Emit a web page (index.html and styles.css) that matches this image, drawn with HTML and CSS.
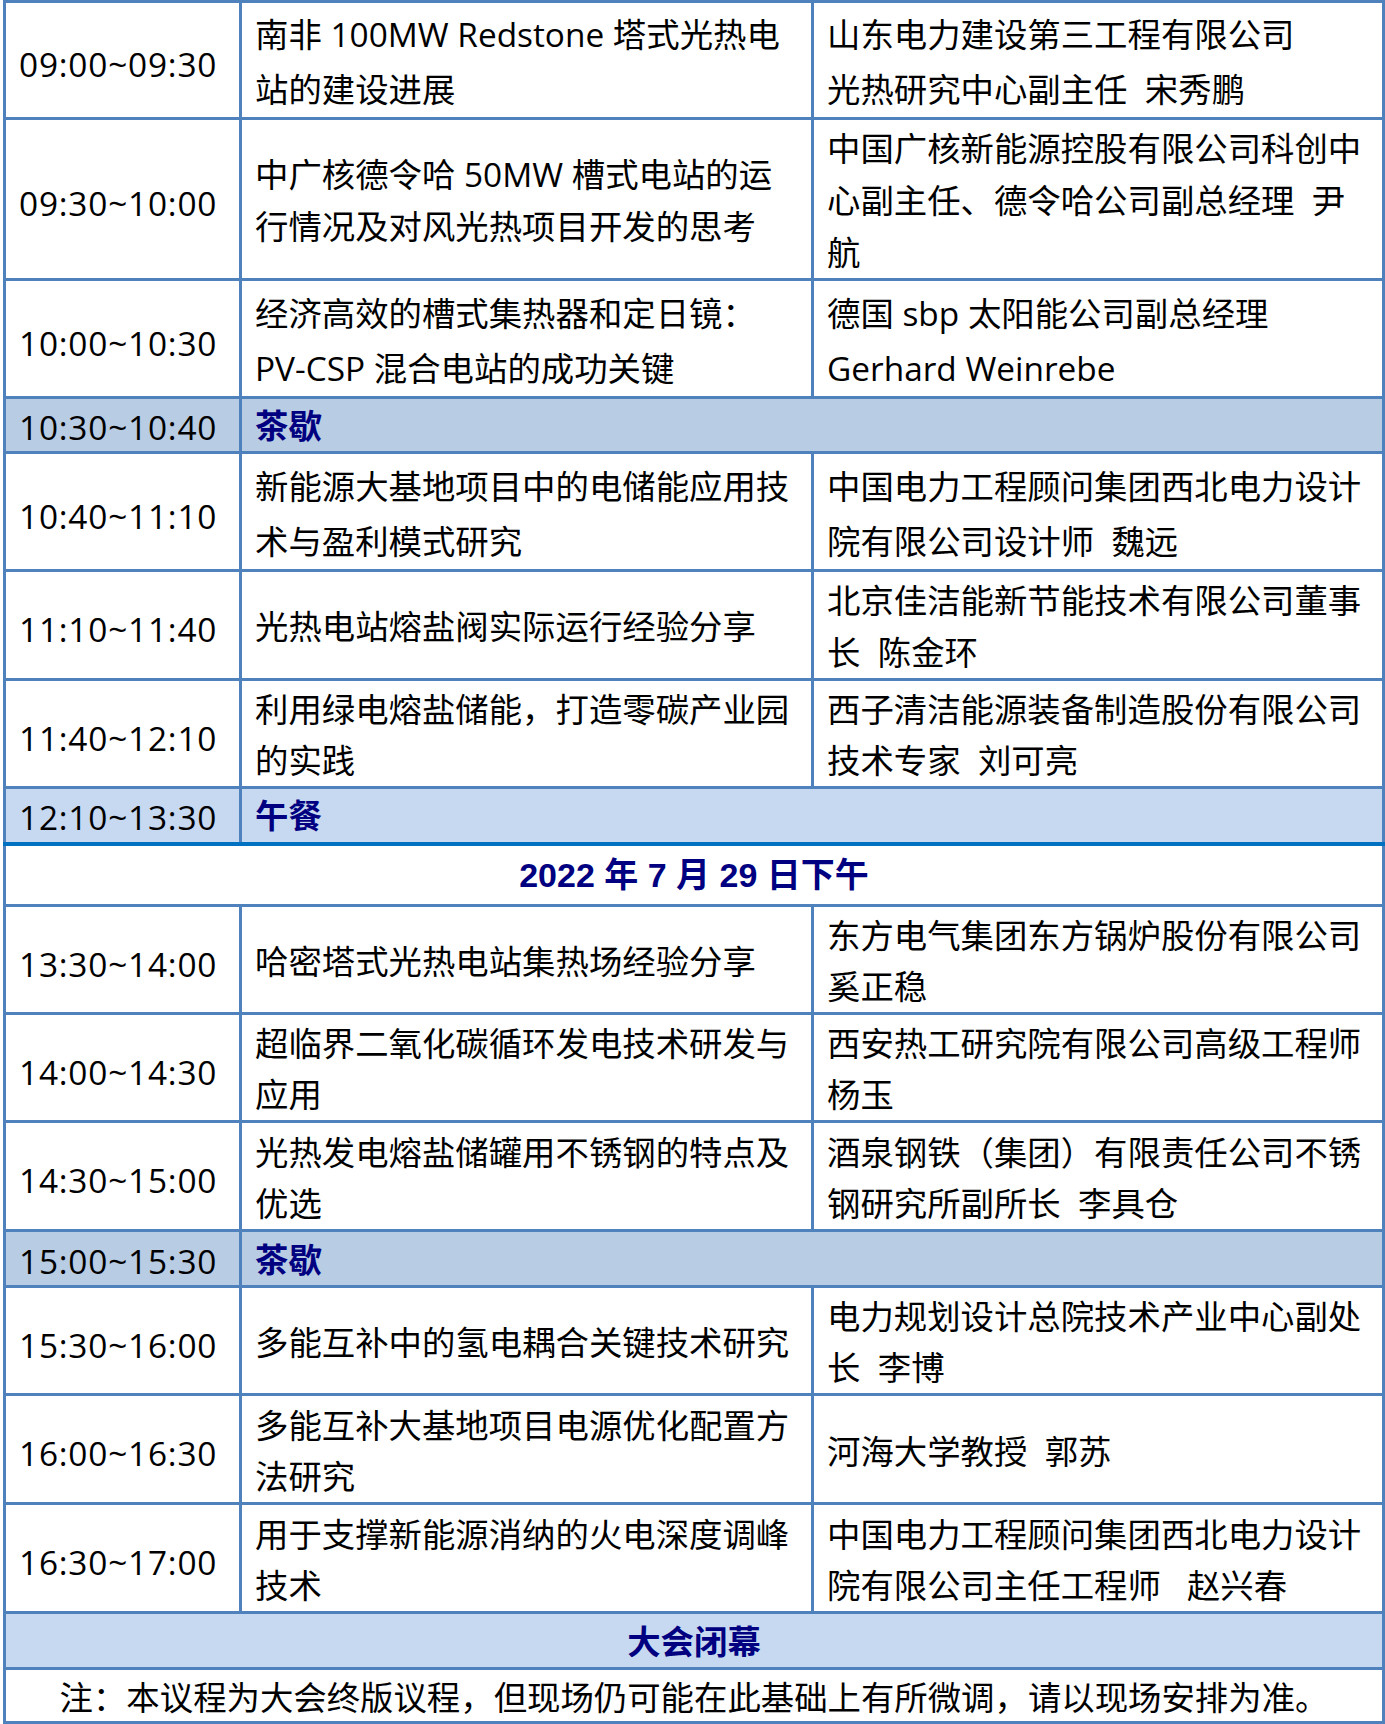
FILE: index.html
```html
<!DOCTYPE html>
<html lang="zh-CN">
<head>
<meta charset="utf-8">
<title>议程</title>
<link rel="stylesheet" href="styles.css">
</head>
<body>
<table class="agenda">
  <colgroup>
    <col class="c-time">
    <col class="c-topic">
    <col class="c-spk">
  </colgroup>
  <tbody>
    <tr class="r117 lA">
      <td class="time">09:00~09:30</td>
      <td class="txt">南非 100MW Redstone 塔式光热电<br>站的建设进展</td>
      <td class="txt">山东电力建设第三工程有限公司<br>光热研究中心副主任&nbsp;&nbsp;宋秀鹏</td>
    </tr>
    <tr class="r161 lB">
      <td class="time">09:30~10:00</td>
      <td class="txt">中广核德令哈 50MW 槽式电站的运<br>行情况及对风光热项目开发的思考</td>
      <td class="txt">中国广核新能源控股有限公司科创中<br>心副主任、德令哈公司副总经理&nbsp;&nbsp;尹<br>航</td>
    </tr>
    <tr class="r118 lA">
      <td class="time">10:00~10:30</td>
      <td class="txt">经济高效的槽式集热器和定日镜：<br>PV-CSP 混合电站的成功关键</td>
      <td class="txt">德国 sbp 太阳能公司副总经理<br>Gerhard Weinrebe</td>
    </tr>
    <tr class="r55 brk tea">
      <td class="time">10:30~10:40</td>
      <td class="txt hl" colspan="2">茶歇</td>
    </tr>
    <tr class="r118 lA">
      <td class="time">10:40~11:10</td>
      <td class="txt">新能源大基地项目中的电储能应用技<br>术与盈利模式研究</td>
      <td class="txt">中国电力工程顾问集团西北电力设计<br>院有限公司设计师&nbsp;&nbsp;魏远</td>
    </tr>
    <tr class="r109 lB">
      <td class="time">11:10~11:40</td>
      <td class="txt">光热电站熔盐阀实际运行经验分享</td>
      <td class="txt">北京佳洁能新节能技术有限公司董事<br>长&nbsp;&nbsp;陈金环</td>
    </tr>
    <tr class="r108 lC">
      <td class="time">11:40~12:10</td>
      <td class="txt">利用绿电熔盐储能，打造零碳产业园<br>的实践</td>
      <td class="txt">西子清洁能源装备制造股份有限公司<br>技术专家&nbsp;&nbsp;刘可亮</td>
    </tr>
    <tr class="r56 brk lunch">
      <td class="time">12:10~13:30</td>
      <td class="txt hl" colspan="2">午餐</td>
    </tr>
    <tr class="r62 date">
      <td class="center hl" colspan="3">2022 年 7 月 29 日下午</td>
    </tr>
    <tr class="r108 lC">
      <td class="time">13:30~14:00</td>
      <td class="txt">哈密塔式光热电站集热场经验分享</td>
      <td class="txt">东方电气集团东方锅炉股份有限公司<br>奚正稳</td>
    </tr>
    <tr class="r108 lC">
      <td class="time">14:00~14:30</td>
      <td class="txt">超临界二氧化碳循环发电技术研发与<br>应用</td>
      <td class="txt">西安热工研究院有限公司高级工程师<br>杨玉</td>
    </tr>
    <tr class="r109 lD">
      <td class="time">14:30~15:00</td>
      <td class="txt">光热发电熔盐储罐用不锈钢的特点及<br>优选</td>
      <td class="txt">酒泉钢铁（集团）有限责任公司不锈<br>钢研究所副所长&nbsp;&nbsp;李具仓</td>
    </tr>
    <tr class="r56 brk tea">
      <td class="time">15:00~15:30</td>
      <td class="txt hl" colspan="2">茶歇</td>
    </tr>
    <tr class="r108 lC">
      <td class="time">15:30~16:00</td>
      <td class="txt">多能互补中的氢电耦合关键技术研究</td>
      <td class="txt">电力规划设计总院技术产业中心副处<br>长&nbsp;&nbsp;李博</td>
    </tr>
    <tr class="r109 lD">
      <td class="time">16:00~16:30</td>
      <td class="txt">多能互补大基地项目电源优化配置方<br>法研究</td>
      <td class="txt">河海大学教授&nbsp;&nbsp;郭苏</td>
    </tr>
    <tr class="r109 lD">
      <td class="time">16:30~17:00</td>
      <td class="txt">用于支撑新能源消纳的火电深度调峰<br>技术</td>
      <td class="txt">中国电力工程顾问集团西北电力设计<br>院有限公司主任工程师&nbsp;&nbsp;&nbsp;赵兴春</td>
    </tr>
    <tr class="r56 brk close">
      <td class="center hl" colspan="3">大会闭幕</td>
    </tr>
    <tr class="r54 note">
      <td class="center" colspan="3">注：本议程为大会终版议程，但现场仍可能在此基础上有所微调，请以现场安排为准。</td>
    </tr>
  </tbody>
</table>
</body>
</html>
```

FILE: styles.css
```css
html, body {
  margin: 0;
  padding: 0;
  background: #ffffff;
}

body {
  font-family: "Open Sans", "Noto Sans CJK SC", sans-serif;
  font-size: 33.4px;
  color: #000000;
}

.agenda {
  width: 1379px;
  margin-left: 3px;
  table-layout: fixed;
  border-collapse: collapse;
  border: 3px solid #4f81bd;
}

.c-time { width: 236px; }
.c-topic { width: 572px; }
.c-spk { width: 571px; }

.agenda td {
  border: 3px solid #4f81bd;
  padding: 0 13px;
  vertical-align: middle;
  white-space: nowrap;
  overflow: hidden;
}

.agenda td.time {
  padding: 8px 0 0 13px;
  line-height: 40px;
  letter-spacing: 0.8px;
}

/* line spacing variants per row */
.lA td.txt { line-height: 55px; padding-top: 4px; }
.lB td.txt { line-height: 52px; padding-top: 2px; }
.lC td.txt { line-height: 51px; padding-top: 3px; }
.lD td.txt { line-height: 51px; padding-top: 4px; }

.r117 { height: 117px; }
.r161 { height: 161px; }
.r118 { height: 118px; }
.r109 { height: 109px; }
.r108 { height: 108px; }
.r62 { height: 62px; }
.r56 { height: 56px; }
.r55 { height: 55px; }
.r54 { height: 54px; }

.brk td { line-height: 40px; padding-top: 4px; }
.brk td.time { padding-top: 4px; }
.tea td { background: #b8cce4; }
.lunch td { background: #c6d9f1; }
.close td { background: #c6d9f1; }

.lunch td {
  border-bottom: 4px solid #0070c0;
}

.hl {
  font-family: "Liberation Sans", "Noto Sans CJK SC", sans-serif;
  font-weight: 700;
  color: #000080;
}

.center {
  text-align: center;
}

.date td {
  font-size: 34px;
}

.date td, .close td, .note td {
  line-height: 40px;
}

.note td {
  padding-top: 2px;
}
```
